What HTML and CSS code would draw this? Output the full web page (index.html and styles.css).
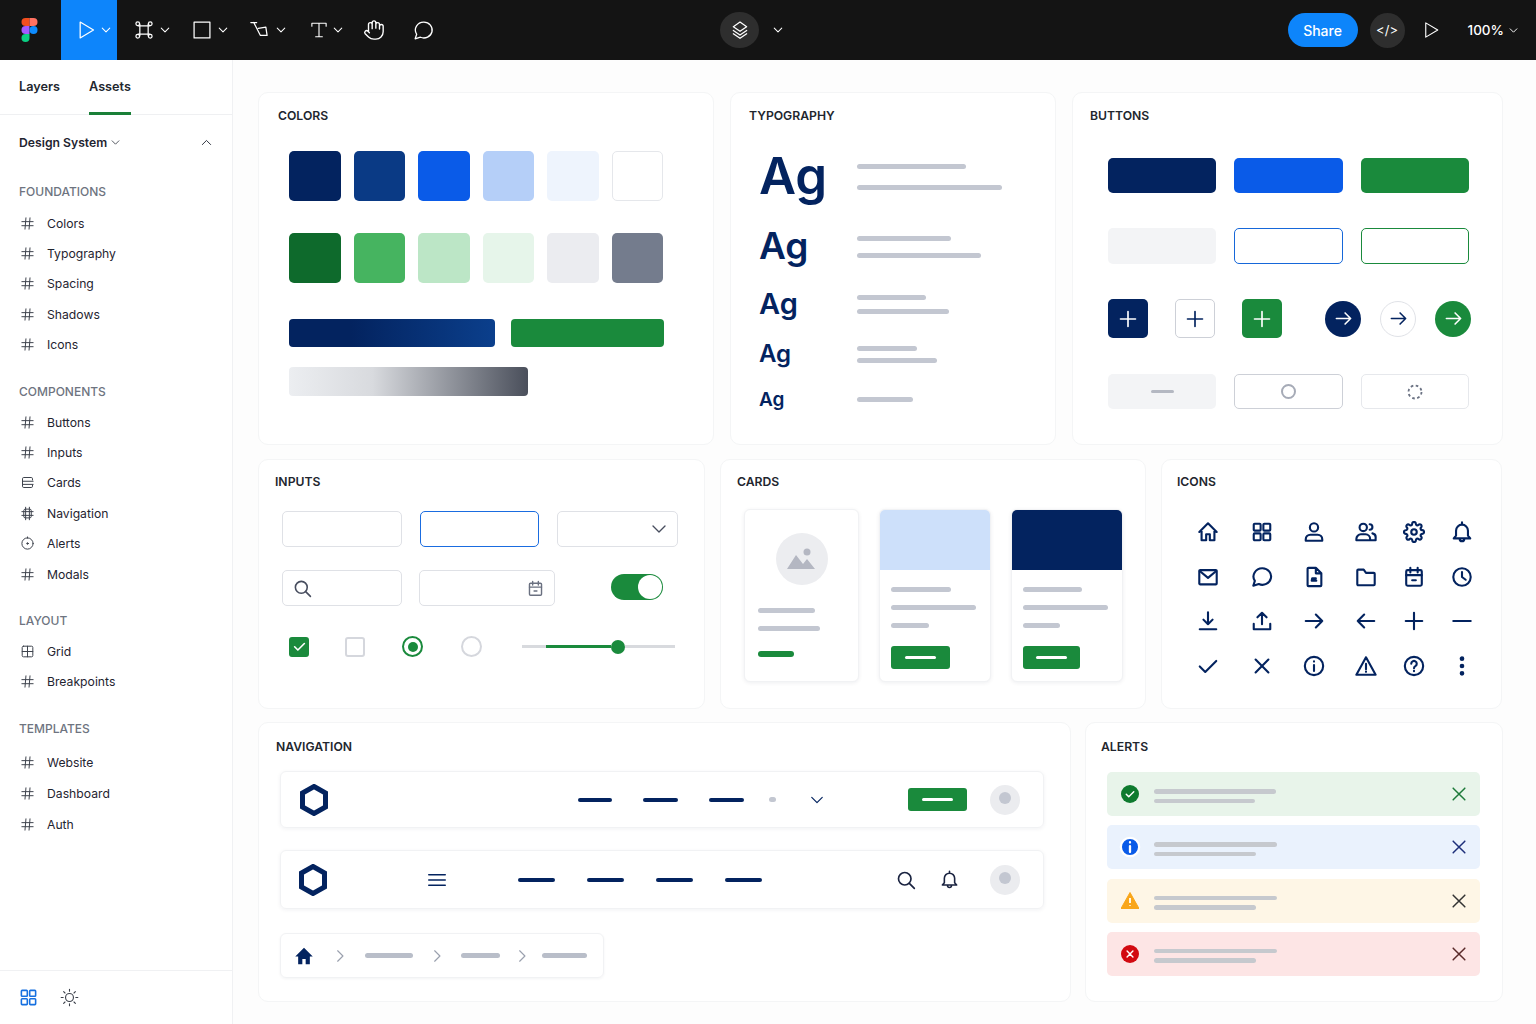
FILE: index.html
```html
<!DOCTYPE html>
<html lang="en">
<head>
    <meta charset="UTF-8">
    <meta name="viewport" content="width=device-width, initial-scale=1.0">
    <title>Design System</title>
    <link rel="stylesheet" href="styles.css">
</head>
<body>

    <svg class="sprite" xmlns="http://www.w3.org/2000/svg">
        <symbol id="i-play" viewBox="0 0 24 24"><path d="M5 2.500 21 12 5 21.500z"/></symbol>
        <symbol id="i-chev" viewBox="0 0 24 24"><path d="M3 7.500l9 9 9-9"/></symbol>
        <symbol id="i-frame" viewBox="0 0 24 24"><path d="M7 5v14M17 5v14M5 7h14M5 17h14"/><circle cx="4.500" cy="4.500" r="2.200"/><circle cx="19.500" cy="4.500" r="2.200"/><circle cx="4.500" cy="19.500" r="2.200"/><circle cx="19.500" cy="19.500" r="2.200"/></symbol>
        <symbol id="i-rect" viewBox="0 0 24 24"><rect x="2.500" y="2.500" width="19" height="19"/></symbol>
        <symbol id="i-pen" viewBox="0 0 24 24"><path d="M1 3h7M4.500 3l8 15.500h8M10 10l9-1.500 1.500 10"/></symbol>
        <symbol id="i-type" viewBox="0 0 24 24"><path d="M2.500 7V3h19v4M12 3v18M7.500 21h9"/></symbol>
        <symbol id="i-hand" viewBox="0 0 24 24"><path d="M18 11V6a2 2 0 0 0-4 0M14 10V4a2 2 0 0 0-4 0v2M10 10.500V6a2 2 0 0 0-4 0v8M18 8a2 2 0 1 1 4 0v6a8 8 0 0 1-8 8h-2c-2.800 0-4.500-.86-6-2.340l-3.600-3.600a2 2 0 0 1 2.830-2.820L7 15"/></symbol>
        <symbol id="i-comment" viewBox="0 0 24 24"><path d="M12.500 2.500a9.500 9 0 1 1-4 17.200L2.500 21.500l1.700-5.200A9.500 9 0 0 1 12.500 2.500z"/></symbol>
        <symbol id="i-layers" viewBox="0 0 24 24"><path d="M12 2.500 20 8l-8 5.500L4 8zM4 12.500l8 5.500 8-5.500M4 16.500l8 5.500 8-5.500"/></symbol>
        <symbol id="i-hash" viewBox="0 0 24 24"><path d="M3 9h18M3 15.500h18M9.500 3 8 21M16 3l-1.500 18"/></symbol>
        <symbol id="i-cards" viewBox="0 0 24 24"><path d="M20 8V6a2 2 0 0 0-2-2H6a2 2 0 0 0-2 2v12a2 2 0 0 0 2 2h12a2 2 0 0 0 2-2v-2M4 10h17M4 15h17"/></symbol>
        <symbol id="i-navframe" viewBox="0 0 24 24"><rect x="6" y="5" width="12" height="14" rx="2.500"/><path d="M9 2v20M15 2v20M3 9h18M3 15h18"/></symbol>
        <symbol id="i-target" viewBox="0 0 24 24"><circle cx="12" cy="12" r="9"/><path d="M12 1.500v2"/><circle cx="12" cy="12" r="1.200" class="solid"/></symbol>
        <symbol id="i-gridbox" viewBox="0 0 24 24"><rect x="3.500" y="3.500" width="17" height="17" rx="2"/><path d="M3.500 12h17M12 3.500v17"/></symbol>
        <symbol id="i-search" viewBox="0 0 24 24"><circle cx="10.500" cy="10.500" r="7.500"/><path d="M16 16l6 6"/></symbol>
        <symbol id="i-calendar" viewBox="0 0 24 24"><rect x="3.500" y="4.500" width="17" height="17" rx="1.500"/><path d="M3.500 10h17M8 2v5M16 2v5M10 15.500h4"/></symbol>
        <symbol id="i-home" viewBox="0 0 24 24"><path d="M2.500 12 12 2.500l9.500 9.500M5 9.500V21h5v-6.500h4V21h5V9.500"/></symbol>
        <symbol id="i-grid" viewBox="0 0 24 24"><rect x="3" y="3" width="7.500" height="7.500" rx="1"/><rect x="13.500" y="3" width="7.500" height="7.500" rx="1"/><rect x="3" y="13.500" width="7.500" height="7.500" rx="1"/><rect x="13.500" y="13.500" width="7.500" height="7.500" rx="1"/></symbol>
        <symbol id="i-user" viewBox="0 0 24 24"><circle cx="12" cy="7" r="4.500"/><path d="M3 21.500V20a5 5 0 0 1 5-5h8a5 5 0 0 1 5 5v1.500z"/></symbol>
        <symbol id="i-users" viewBox="0 0 24 24"><circle cx="9" cy="7" r="4"/><path d="M1.500 21v-1.500a5 5 0 0 1 5-5h5a5 5 0 0 1 5 5V21zM16 3.500a3 3 0 0 1 0 6M19 13.500a4.500 4.500 0 0 1 3.500 5V21h-6"/></symbol>
        <symbol id="i-gear" viewBox="0 0 24 24"><circle cx="12" cy="12" r="3"/><path d="M19.400 15a1.650 1.650 0 0 0 .33 1.820l.06.06a2 2 0 0 1 0 2.830 2 2 0 0 1-2.830 0l-.06-.06a1.650 1.650 0 0 0-1.820-.33 1.650 1.650 0 0 0-1 1.510V21a2 2 0 0 1-2 2 2 2 0 0 1-2-2v-.09A1.650 1.650 0 0 0 9 19.400a1.650 1.650 0 0 0-1.820.33l-.06.06a2 2 0 0 1-2.830 0 2 2 0 0 1 0-2.830l.06-.06a1.650 1.650 0 0 0 .33-1.820 1.650 1.650 0 0 0-1.510-1H3a2 2 0 0 1-2-2 2 2 0 0 1 2-2h.09A1.650 1.650 0 0 0 4.600 9a1.650 1.650 0 0 0-.33-1.820l-.06-.06a2 2 0 0 1 0-2.830 2 2 0 0 1 2.830 0l.06.06a1.650 1.650 0 0 0 1.820.33H9a1.650 1.650 0 0 0 1-1.510V3a2 2 0 0 1 2-2 2 2 0 0 1 2 2v.09a1.650 1.650 0 0 0 1 1.510 1.650 1.650 0 0 0 1.820-.33l.06-.06a2 2 0 0 1 2.830 0 2 2 0 0 1 0 2.830l-.06.06a1.650 1.650 0 0 0-.33 1.820V9a1.650 1.650 0 0 0 1.510 1H21a2 2 0 0 1 2 2 2 2 0 0 1-2 2h-.09a1.650 1.650 0 0 0-1.510 1z"/></symbol>
        <symbol id="i-bell" viewBox="0 0 24 24"><path d="M12 4a6.500 6.500 0 0 1 6.500 6.500V16l2.500 3H3l2.500-3v-5.500A6.500 6.500 0 0 1 12 4zM12 1.500V4M9.500 19.500a2.500 2.500 0 0 0 5 0"/></symbol>
        <symbol id="i-mail" viewBox="0 0 24 24"><rect x="2.500" y="4.500" width="19" height="15.500" rx="1"/><path d="M3 5.500l9 7.500 9-7.500"/></symbol>
        <symbol id="i-file" viewBox="0 0 24 24"><path d="M6 2h8l6 6v13a1 1 0 0 1-1 1H6a1 1 0 0 1-1-1V3a1 1 0 0 1 1-1zM14 2v6h6M9.500 16h5M9.500 16l.5-2.500h4"/></symbol>
        <symbol id="i-folder" viewBox="0 0 24 24"><path d="M2.500 5a1 1 0 0 1 1-1h6l2.500 3.500h8.500a1 1 0 0 1 1 1V20a1 1 0 0 1-1 1h-17a1 1 0 0 1-1-1z"/></symbol>
        <symbol id="i-clock" viewBox="0 0 24 24"><circle cx="12" cy="12" r="9.500"/><path d="M12 6.500V12l4 3"/></symbol>
        <symbol id="i-download" viewBox="0 0 24 24"><path d="M12 2.500v13M7 10.500l5 5 5-5M3 21h18"/></symbol>
        <symbol id="i-upload" viewBox="0 0 24 24"><path d="M12 15.500V3M7 8l5-5 5 5M3 15v6h18v-6"/></symbol>
        <symbol id="i-right" viewBox="0 0 24 24"><path d="M3 12h18M14 5l7 7-7 7"/></symbol>
        <symbol id="i-left" viewBox="0 0 24 24"><path d="M21 12H3M10 5l-7 7 7 7"/></symbol>
        <symbol id="i-plus" viewBox="0 0 24 24"><path d="M12 3v18M3 12h18"/></symbol>
        <symbol id="i-minus" viewBox="0 0 24 24"><path d="M2.500 12h19"/></symbol>
        <symbol id="i-check" viewBox="0 0 24 24"><path d="M3 12.500l6 6L21 6.500"/></symbol>
        <symbol id="i-x" viewBox="0 0 24 24"><path d="M5 5l14 14M19 5 5 19"/></symbol>
        <symbol id="i-info" viewBox="0 0 24 24"><circle cx="12" cy="12" r="10"/><path d="M12 11v6.500M12 6.800v.4"/></symbol>
        <symbol id="i-warn" viewBox="0 0 24 24"><path d="M12 2.500 1.500 21.500h21zM12 9.500v6M12 18v.4"/></symbol>
        <symbol id="i-help" viewBox="0 0 24 24"><circle cx="12" cy="12" r="10"/><path d="M9 9.500a3 3 0 1 1 4.500 2.600c-1 .6-1.500 1.200-1.500 2.400M12 17.300v.4"/></symbol>
        <symbol id="i-dots" viewBox="0 0 24 24"><circle cx="12" cy="4" r="1.400"/><circle cx="12" cy="12" r="1.400"/><circle cx="12" cy="20" r="1.400"/></symbol>
        <symbol id="i-sun" viewBox="0 0 24 24"><circle cx="12" cy="12" r="5"/><path d="M12 1.500v2.500M12 20v2.500M1.500 12H4M20 12h2.500M4.600 4.600l1.700 1.700M17.700 17.700l1.700 1.700M4.600 19.400l1.700-1.700M17.700 6.300l1.700-1.700"/></symbol>
        <symbol id="i-hex" viewBox="0 0 30 32"><path d="M15 2.500 26.500 9v14L15 29.500 3.500 23V9z"/></symbol>
        <symbol id="i-menu" viewBox="0 0 24 24"><path d="M1 5h22M1 12h22M1 19h22"/></symbol>
        <symbol id="i-crumb" viewBox="0 0 24 24"><path d="M8 3l9 9-9 9"/></symbol>
    </svg>

    <header class="topbar">
        <div class="logo">
            <svg viewBox="0 0 16 24" width="17" height="24">
                <path fill="#f24e1e" d="M8 0H4a4 4 0 0 0 0 8h4z"/>
                <path fill="#ff7262" d="M8 0h4a4 4 0 0 1 0 8H8z"/>
                <path fill="#a259ff" d="M8 8H4a4 4 0 0 0 0 8h4z"/>
                <circle fill="#0d8cff" cx="12" cy="12" r="4"/>
                <path fill="#0acf83" d="M4 16h4v4a4 4 0 1 1-4-4z"/>
            </svg>
        </div>
        <div class="move-tool">
            <svg class="icon tb-icon"><use href="#i-play"/></svg>
            <svg class="icon tb-chev"><use href="#i-chev"/></svg>
        </div>
        <div class="tools">
            <div class="tool"><svg class="icon tb-icon"><use href="#i-frame"/></svg><svg class="icon tb-chev"><use href="#i-chev"/></svg></div>
            <div class="tool"><svg class="icon tb-icon"><use href="#i-rect"/></svg><svg class="icon tb-chev"><use href="#i-chev"/></svg></div>
            <div class="tool"><svg class="icon tb-icon"><use href="#i-pen"/></svg><svg class="icon tb-chev"><use href="#i-chev"/></svg></div>
            <div class="tool tool-type"><svg class="icon tb-icon"><use href="#i-type"/></svg><svg class="icon tb-chev"><use href="#i-chev"/></svg></div>
            <div class="tool tool-hand"><svg class="icon tb-icon"><use href="#i-hand"/></svg></div>
            <div class="tool tool-comment"><svg class="icon tb-icon"><use href="#i-comment"/></svg></div>
        </div>
        <div class="center-tools">
            <div class="round-btn layers-btn"><svg class="icon"><use href="#i-layers"/></svg></div>
            <svg class="icon tb-chev"><use href="#i-chev"/></svg>
        </div>
        <div class="right-tools">
            <div class="share">Share</div>
            <div class="round-btn code-btn">&lt;/&gt;</div>
            <svg class="icon tb-play"><use href="#i-play"/></svg>
            <div class="zoom">100%<svg class="icon tb-chev"><use href="#i-chev"/></svg></div>
        </div>
    </header>

    <div class="app">
        <aside class="sidebar">
            <div class="tabs">
                <div class="tab">Layers</div>
                <div class="tab active">Assets</div>
            </div>
            <div class="lib-row">
                <span>Design System</span>
                <svg class="icon lib-chev"><use href="#i-chev"/></svg>
                <svg class="icon lib-up"><use href="#i-chev"/></svg>
            </div>
            <div class="nav-lists">
                <div class="group">
                    <div class="group-title">FOUNDATIONS</div>
                    <div class="item"><svg class="icon"><use href="#i-hash"/></svg>Colors</div>
                    <div class="item"><svg class="icon"><use href="#i-hash"/></svg>Typography</div>
                    <div class="item"><svg class="icon"><use href="#i-hash"/></svg>Spacing</div>
                    <div class="item"><svg class="icon"><use href="#i-hash"/></svg>Shadows</div>
                    <div class="item"><svg class="icon"><use href="#i-hash"/></svg>Icons</div>
                </div>
                <div class="group">
                    <div class="group-title">COMPONENTS</div>
                    <div class="item"><svg class="icon"><use href="#i-hash"/></svg>Buttons</div>
                    <div class="item"><svg class="icon"><use href="#i-hash"/></svg>Inputs</div>
                    <div class="item"><svg class="icon"><use href="#i-cards"/></svg>Cards</div>
                    <div class="item"><svg class="icon"><use href="#i-navframe"/></svg>Navigation</div>
                    <div class="item"><svg class="icon"><use href="#i-target"/></svg>Alerts</div>
                    <div class="item"><svg class="icon"><use href="#i-hash"/></svg>Modals</div>
                </div>
                <div class="group">
                    <div class="group-title">LAYOUT</div>
                    <div class="item"><svg class="icon"><use href="#i-gridbox"/></svg>Grid</div>
                    <div class="item"><svg class="icon"><use href="#i-hash"/></svg>Breakpoints</div>
                </div>
                <div class="group group-templates">
                    <div class="group-title">TEMPLATES</div>
                    <div class="item"><svg class="icon"><use href="#i-hash"/></svg>Website</div>
                    <div class="item"><svg class="icon"><use href="#i-hash"/></svg>Dashboard</div>
                    <div class="item"><svg class="icon"><use href="#i-hash"/></svg>Auth</div>
                </div>
            </div>
            <div class="side-footer">
                <svg class="icon foot-grid"><use href="#i-grid"/></svg>
                <svg class="icon foot-sun"><use href="#i-sun"/></svg>
            </div>
        </aside>

        <main class="canvas">
            <div class="row row-top">
                <section class="panel colors">
                    <h2 class="panel-title">COLORS</h2>
                    <div class="swatches">
                        <div class="swatch navy"></div>
                        <div class="swatch navy2"></div>
                        <div class="swatch blue"></div>
                        <div class="swatch sky"></div>
                        <div class="swatch ice"></div>
                        <div class="swatch white"></div>
                        <div class="swatch forest"></div>
                        <div class="swatch leaf"></div>
                        <div class="swatch mint"></div>
                        <div class="swatch pale"></div>
                        <div class="swatch mist"></div>
                        <div class="swatch slate"></div>
                    </div>
                    <div class="grad-row">
                        <div class="grad grad-navy"></div>
                        <div class="grad grad-green"></div>
                    </div>
                    <div class="grad grad-gray"></div>
                </section>

                <section class="panel typography">
                    <h2 class="panel-title">TYPOGRAPHY</h2>
                    <div class="type-rows">
                        <div class="type-row r1">
                            <div class="ag">Ag</div>
                            <div class="type-lines"><div class="line" style="width:109px"></div><div class="line" style="width:145px"></div></div>
                        </div>
                        <div class="type-row r2">
                            <div class="ag">Ag</div>
                            <div class="type-lines"><div class="line" style="width:94px"></div><div class="line" style="width:124px"></div></div>
                        </div>
                        <div class="type-row r3">
                            <div class="ag">Ag</div>
                            <div class="type-lines"><div class="line" style="width:69px"></div><div class="line" style="width:92px"></div></div>
                        </div>
                        <div class="type-row r4">
                            <div class="ag">Ag</div>
                            <div class="type-lines"><div class="line" style="width:60px"></div><div class="line" style="width:80px"></div></div>
                        </div>
                        <div class="type-row r5">
                            <div class="ag">Ag</div>
                            <div class="type-lines"><div class="line" style="width:56px"></div></div>
                        </div>
                    </div>
                </section>

                <section class="panel buttons">
                    <h2 class="panel-title">BUTTONS</h2>
                    <div class="btn-rows">
                        <div class="btn-row">
                            <div class="btn b-navy"></div>
                            <div class="btn b-blue"></div>
                            <div class="btn b-green"></div>
                        </div>
                        <div class="btn-row tall">
                            <div class="btn b-soft"></div>
                            <div class="btn b-outline-blue"></div>
                            <div class="btn b-outline-green"></div>
                        </div>
                        <div class="icon-btns">
                            <div class="sq b-navy"><svg class="icon"><use href="#i-plus"/></svg></div>
                            <div class="sq sq-plain"><svg class="icon"><use href="#i-plus"/></svg></div>
                            <div class="sq b-green"><svg class="icon"><use href="#i-plus"/></svg></div>
                            <div class="circ b-navy first"><svg class="icon"><use href="#i-right"/></svg></div>
                            <div class="circ circ-plain"><svg class="icon"><use href="#i-right"/></svg></div>
                            <div class="circ b-green"><svg class="icon"><use href="#i-right"/></svg></div>
                        </div>
                        <div class="btn-row">
                            <div class="btn b-soft state"><span class="dash"></span></div>
                            <div class="btn b-line state"><span class="ring"></span></div>
                            <div class="btn b-faint state">
                                <svg class="spinner" viewBox="0 0 16 16"><circle cx="8" cy="8" r="6.500" stroke-dasharray="2.600 2.500"/></svg>
                            </div>
                        </div>
                    </div>
                </section>
            </div>

            <div class="row row-mid">
                <section class="panel inputs">
                    <h2 class="panel-title">INPUTS</h2>
                    <div class="input-row first">
                        <div class="field w120"></div>
                        <div class="field w119 focus"></div>
                        <div class="field w121 end"><svg class="icon field-chev"><use href="#i-chev"/></svg></div>
                    </div>
                    <div class="input-row second">
                        <div class="field w120"><svg class="icon field-search"><use href="#i-search"/></svg></div>
                        <div class="field w136 end"><svg class="icon field-cal"><use href="#i-calendar"/></svg></div>
                        <div class="toggle"><span class="knob"></span></div>
                    </div>
                    <div class="controls">
                        <div class="check on"><svg class="icon"><use href="#i-check"/></svg></div>
                        <div class="check"></div>
                        <div class="radio on"><span></span></div>
                        <div class="radio"></div>
                        <div class="slider">
                            <span class="track s24"></span>
                            <span class="track fill"></span>
                            <span class="thumb"></span>
                            <span class="track s50"></span>
                        </div>
                    </div>
                </section>

                <section class="panel cards">
                    <h2 class="panel-title">CARDS</h2>
                    <div class="card-row">
                        <div class="card card-plain">
                            <div class="card-avatar">
                                <svg viewBox="0 0 30 24" width="30" height="24">
                                    <circle cx="20" cy="5" r="3.500" fill="#b4b7c2"/>
                                    <path fill="#b4b7c2" d="M0 22 9 8l7 9 4-5 8 10z"/>
                                </svg>
                            </div>
                            <div class="line cl" style="width:57px"></div>
                            <div class="line cl" style="width:62px"></div>
                            <div class="line card-green" style="width:36px"></div>
                        </div>
                        <div class="card">
                            <div class="card-img img-sky"></div>
                            <div class="card-body">
                                <div class="line cl" style="width:60px"></div>
                                <div class="line cl" style="width:85px"></div>
                                <div class="line cl" style="width:38px"></div>
                                <div class="card-btn"><span></span></div>
                            </div>
                        </div>
                        <div class="card">
                            <div class="card-img img-navy"></div>
                            <div class="card-body">
                                <div class="line cl" style="width:59px"></div>
                                <div class="line cl" style="width:85px"></div>
                                <div class="line cl" style="width:37px"></div>
                                <div class="card-btn narrow"><span></span></div>
                            </div>
                        </div>
                    </div>
                </section>

                <section class="panel icons-panel">
                    <h2 class="panel-title">ICONS</h2>
                    <div class="icon-grid">
                        <svg class="icon"><use href="#i-home"/></svg>
                        <svg class="icon"><use href="#i-grid"/></svg>
                        <svg class="icon"><use href="#i-user"/></svg>
                        <svg class="icon"><use href="#i-users"/></svg>
                        <svg class="icon"><use href="#i-gear"/></svg>
                        <svg class="icon"><use href="#i-bell"/></svg>
                        <svg class="icon"><use href="#i-mail"/></svg>
                        <svg class="icon"><use href="#i-comment"/></svg>
                        <svg class="icon"><use href="#i-file"/></svg>
                        <svg class="icon"><use href="#i-folder"/></svg>
                        <svg class="icon"><use href="#i-calendar"/></svg>
                        <svg class="icon"><use href="#i-clock"/></svg>
                        <svg class="icon"><use href="#i-download"/></svg>
                        <svg class="icon"><use href="#i-upload"/></svg>
                        <svg class="icon"><use href="#i-right"/></svg>
                        <svg class="icon"><use href="#i-left"/></svg>
                        <svg class="icon"><use href="#i-plus"/></svg>
                        <svg class="icon"><use href="#i-minus"/></svg>
                        <svg class="icon"><use href="#i-check"/></svg>
                        <svg class="icon"><use href="#i-x"/></svg>
                        <svg class="icon"><use href="#i-info"/></svg>
                        <svg class="icon"><use href="#i-warn"/></svg>
                        <svg class="icon"><use href="#i-help"/></svg>
                        <svg class="icon icon-solid"><use href="#i-dots"/></svg>
                    </div>
                </section>
            </div>

            <div class="row row-bottom">
                <section class="panel navigation">
                    <h2 class="panel-title">NAVIGATION</h2>
                    <div class="navbar nb1">
                        <svg class="icon hex"><use href="#i-hex"/></svg>
                        <div class="nav-dashes d1">
                            <span class="dash-navy w34"></span>
                            <span class="dash-navy w35"></span>
                            <span class="dash-navy w35"></span>
                        </div>
                        <span class="nav-dot"></span>
                        <svg class="icon nav-chev"><use href="#i-chev"/></svg>
                        <div class="nav-cta"><span></span></div>
                        <div class="avatar"><span></span></div>
                    </div>
                    <div class="navbar nb2">
                        <svg class="icon hex"><use href="#i-hex"/></svg>
                        <svg class="icon nav-menu"><use href="#i-menu"/></svg>
                        <div class="nav-dashes d2">
                            <span class="dash-navy w37"></span>
                            <span class="dash-navy w37"></span>
                            <span class="dash-navy w37"></span>
                            <span class="dash-navy w37"></span>
                        </div>
                        <svg class="icon nav-search"><use href="#i-search"/></svg>
                        <svg class="icon nav-bell"><use href="#i-bell"/></svg>
                        <div class="avatar"><span></span></div>
                    </div>
                    <div class="crumbs">
                        <svg class="crumb-home" viewBox="0 0 24 24"><path d="M12 2 1.500 12.500H5V22h5v-6.500h4V22h5v-9.500h3.500z"/></svg>
                        <svg class="icon crumb-sep s1"><use href="#i-crumb"/></svg>
                        <span class="line crumb-line" style="width:48px"></span>
                        <svg class="icon crumb-sep"><use href="#i-crumb"/></svg>
                        <span class="line crumb-line" style="width:39px"></span>
                        <svg class="icon crumb-sep s3"><use href="#i-crumb"/></svg>
                        <span class="line crumb-line" style="width:45px"></span>
                    </div>
                </section>

                <section class="panel alerts">
                    <h2 class="panel-title">ALERTS</h2>
                    <div class="alert-list">
                        <div class="alert a-success">
                            <div class="alert-icon"><svg class="icon"><use href="#i-check"/></svg></div>
                            <div class="alert-lines"><div class="line" style="width:122px"></div><div class="line" style="width:101px"></div></div>
                            <svg class="icon alert-x"><use href="#i-x"/></svg>
                        </div>
                        <div class="alert a-info">
                            <div class="alert-icon"><svg class="icon"><use href="#i-info"/></svg></div>
                            <div class="alert-lines"><div class="line" style="width:123px"></div><div class="line" style="width:102px"></div></div>
                            <svg class="icon alert-x"><use href="#i-x"/></svg>
                        </div>
                        <div class="alert a-warn">
                            <svg class="warn-tri" viewBox="0 0 18 17"><path d="M9 .5 18 16.500H0z" fill="#f9a61a" stroke="#f9a61a" stroke-linejoin="round"/><path d="M9 6v5M9 13v.8" stroke="#fff" stroke-width="1.800" fill="none"/></svg>
                            <div class="alert-lines"><div class="line" style="width:123px"></div><div class="line" style="width:102px"></div></div>
                            <svg class="icon alert-x"><use href="#i-x"/></svg>
                        </div>
                        <div class="alert a-error">
                            <div class="alert-icon"><svg class="icon"><use href="#i-x"/></svg></div>
                            <div class="alert-lines"><div class="line" style="width:123px"></div><div class="line" style="width:102px"></div></div>
                            <svg class="icon alert-x"><use href="#i-x"/></svg>
                        </div>
                    </div>
                </section>
            </div>
        </main>
    </div>

</body>
</html>
```

FILE: styles.css
```css
* {
    box-sizing: border-box;
}
html, body {
    margin: 0;
    height: 100%;
}
body {
    font-family: Inter, "Liberation Sans", sans-serif;
    background: #fdfdfd;
    color: #1f2430;
    overflow: hidden;
}
.sprite {
    display: none;
}
.icon {
    display: block;
    fill: none;
    stroke: currentColor;
    stroke-width: 2;
    stroke-linecap: round;
    stroke-linejoin: round;
    flex: none;
}
.solid {
    fill: currentColor;
}

/* top toolbar */
.topbar {
    height: 60px;
    background: #141414;
    color: #fff;
    display: flex;
    align-items: center;
}
.logo {
    width: 61px;
    padding-left: 21px;
    display: flex;
}
.move-tool {
    width: 56px;
    height: 60px;
    background: #0d85fb;
    display: flex;
    align-items: center;
    padding-left: 15px;
    gap: 5px;
}
.tb-icon {
    width: 20px;
    height: 20px;
    stroke-width: 1.500;
}
.tb-chev {
    width: 10px;
    height: 10px;
    stroke-width: 2.500;
}
.tools {
    display: flex;
    align-items: center;
    gap: 22px;
    padding-left: 17px;
}
.tool {
    display: flex;
    align-items: center;
    gap: 6px;
}
.tool-type {
    margin-left: 2px;
    gap: 5px;
}
.tool-type .tb-icon {
    width: 18px;
    height: 20px;
}
.tool-hand {
    margin-left: -2px;
}
.tool-hand .tb-icon {
    width: 22px;
    height: 22px;
}
.tool-comment {
    margin-left: 6px;
}
.tool-comment .tb-icon {
    width: 21px;
    height: 21px;
}
.center-tools {
    display: flex;
    align-items: center;
    gap: 14px;
    margin-left: 286px;
}
.round-btn {
    border-radius: 50%;
    background: #2e2e2e;
    display: flex;
    align-items: center;
    justify-content: center;
}
.layers-btn {
    width: 39px;
    height: 36px;
}
.layers-btn .icon {
    width: 20px;
    height: 20px;
    stroke-width: 1.500;
}
.right-tools {
    margin-left: auto;
    display: flex;
    align-items: center;
    padding-right: 18px;
}
.share {
    width: 70px;
    height: 34px;
    border-radius: 17px;
    background: #0d85fb;
    font-size: 14px;
    font-weight: 500;
    display: flex;
    align-items: center;
    justify-content: center;
}
.code-btn {
    width: 35px;
    height: 35px;
    margin-left: 12px;
    font-size: 13px;
    font-weight: 400;
}
.tb-play {
    width: 18px;
    height: 18px;
    stroke-width: 1.500;
    margin-left: 17px;
}
.zoom {
    margin-left: 28px;
    font-size: 13.500px;
    font-weight: 500;
    display: flex;
    align-items: center;
    gap: 5px;
}
.zoom .tb-chev {
    width: 9px;
    height: 9px;
}

/* left sidebar */
.app {
    display: flex;
    height: 964px;
}
.sidebar {
    width: 233px;
    flex: none;
    background: #fff;
    border-right: 1px solid #f0f1f3;
    display: flex;
    flex-direction: column;
}
.tabs {
    height: 55px;
    display: flex;
    gap: 29px;
    padding: 0 19px;
    border-bottom: 1px solid #eff0f2;
}
.tab {
    height: 55px;
    padding-top: 19px;
    font-size: 12.700px;
    line-height: 16px;
    font-weight: 600;
    color: #23272f;
}
.tab.active {
    border-bottom: 3px solid #1a8038;
}
.lib-row {
    display: flex;
    align-items: center;
    height: 16px;
    margin-top: 19px;
    padding: 0 19px;
    font-size: 12.200px;
    font-weight: 600;
}
.lib-chev {
    width: 9px;
    height: 9px;
    margin-left: 4px;
}
.lib-up {
    width: 11px;
    height: 11px;
    margin-left: auto;
    margin-right: 1px;
    transform: rotate(180deg);
}
.nav-lists {
    flex: 1;
    padding: 34px 0 0 19px;
}
.group {
    margin-bottom: 24px;
}
.group-title {
    font-size: 12px;
    line-height: 16px;
    font-weight: 500;
    color: #6e7480;
    margin-bottom: 7px;
}
.group:first-child .group-title {
    margin-bottom: 8px;
}
.group-templates .group-title {
    margin-bottom: 10px;
}
.item {
    height: 30.400px;
    display: flex;
    align-items: center;
    gap: 12px;
    font-size: 12.200px;
    color: #1f2430;
}
.item .icon {
    width: 15px;
    height: 15px;
    margin-left: 1px;
    stroke-width: 1.600;
    color: #3f444e;
}
.group-templates .item {
    height: 31px;
}
.side-footer {
    height: 54px;
    border-top: 1px solid #f0f1f3;
    display: flex;
    align-items: center;
    padding-left: 19px;
    gap: 22px;
}
.foot-grid {
    width: 19px;
    height: 19px;
    color: #1670e0;
}
.foot-sun {
    width: 19px;
    height: 19px;
    stroke-width: 1.400;
    color: #3c414b;
}

/* canvas */
.canvas {
    flex: 1;
    padding: 32px 33px 0 25px;
    background: #fdfdfd;
}
.row {
    display: grid;
}
.row-top {
    grid-template-columns: 456px 326px 431px;
    column-gap: 16px;
    height: 353px;
    margin-bottom: 14px;
}
.row-mid {
    grid-template-columns: 447px 426px 341px;
    column-gap: 15px;
    height: 250px;
    margin-bottom: 13px;
}
.row-bottom {
    grid-template-columns: 813px 418px;
    column-gap: 14px;
    height: 280px;
}
.panel {
    background: #fff;
    border: 1px solid #f4f5f6;
    border-radius: 10px;
}
.panel-title {
    margin: 0;
    font-size: 12.200px;
    line-height: 16px;
    font-weight: 600;
    color: #22262e;
}
.line {
    display: block;
    height: 5px;
    border-radius: 3px;
    background: #c3c7d1;
}

/* colors */
.colors {
    padding: 15px 19px;
}
.swatches {
    margin: 27px 0 0 11px;
    display: grid;
    grid-template-columns: repeat(6, 51.500px);
    column-gap: 13px;
    row-gap: 32px;
}
.swatch {
    height: 50px;
    border-radius: 5px;
}
.navy { background: #03235f; }
.navy2 { background: #0a3a85; }
.blue { background: #0a5be8; }
.sky { background: #b5cff8; }
.ice { background: #eef4fd; }
.white { background: #fff; border: 1px solid #e5e7eb; }
.forest { background: #0e6a2c; }
.leaf { background: #46b460; }
.mint { background: #bce6c6; }
.pale { background: #e6f5ea; }
.mist { background: #ebecf0; }
.slate { background: #747c8d; }
.grad-row {
    display: flex;
    gap: 16px;
    margin: 36px 0 0 11px;
}
.grad {
    height: 28px;
    border-radius: 4px;
}
.grad-navy {
    width: 206px;
    background: linear-gradient(90deg, #03235f, #03235f 30%, #0b3f8c);
}
.grad-green {
    width: 153px;
    background: #1a8a3c;
}
.grad-gray {
    width: 239px;
    height: 29px;
    margin: 20px 0 0 11px;
    background: linear-gradient(90deg, #eceef1, #d8dade 35%, #4a4f5b);
}

/* typography */
.typography {
    padding: 15px 18px;
}
.type-rows {
    margin-top: 18px;
}
.type-row {
    display: flex;
    align-items: center;
    padding-left: 10px;
}
.ag {
    width: 98px;
    flex: none;
    font-weight: 600;
    color: #03235f;
    line-height: 1;
}
.type-lines {
    display: flex;
    flex-direction: column;
}
.r1 { height: 70px; }
.r1 .ag { font-size: 51px; margin-top: -3px; }
.r1 .type-lines { gap: 16px; }
.r2 { height: 70px; }
.r2 .ag { font-size: 37px; margin-top: -3px; }
.r2 .type-lines { gap: 12px; }
.r3 { height: 44px; }
.r3 .ag { font-size: 29px; margin-top: -2px; }
.r3 .type-lines { gap: 9px; }
.r4 { height: 56px; }
.r4 .ag { font-size: 24px; }
.r4 .type-lines { gap: 7px; }
.r5 { height: 34px; }
.r5 .ag { font-size: 19px; }

/* buttons */
.buttons {
    padding: 15px 17px;
}
.btn-rows {
    margin: 34px 0 0 18px;
    display: flex;
    flex-direction: column;
    gap: 35px;
}
.btn-row {
    display: grid;
    grid-template-columns: 108px 109px 108px;
    column-gap: 18px;
    height: 35px;
}
.btn-row.tall {
    height: 36px;
}
.btn {
    border-radius: 5px;
}
.b-navy { background: #03235f; color: #fff; }
.b-blue { background: #0a5be8; }
.b-green { background: #1a8a3c; color: #fff; }
.b-soft { background: #f3f4f6; }
.b-outline-blue { border: 1.500px solid #1667d9; }
.b-outline-green { border: 1.500px solid #1a8a3c; }
.b-line { border: 1.500px solid #cdd0d7; }
.b-faint { border: 1.500px solid #e6e8ec; }
.state {
    display: flex;
    align-items: center;
    justify-content: center;
}
.dash {
    width: 23px;
    height: 3px;
    border-radius: 2px;
    background: #b4b8c2;
}
.ring {
    width: 15px;
    height: 15px;
    border-radius: 50%;
    border: 2px solid #a6abb7;
}
.spinner {
    width: 16px;
    height: 16px;
    fill: none;
    stroke: #6b7283;
    stroke-width: 1.800;
}
.icon-btns {
    display: flex;
    align-items: center;
    height: 39px;
    margin-bottom: 1px;
}
.sq {
    width: 40px;
    height: 39px;
    flex: none;
    margin-right: 27px;
    border-radius: 5px;
    display: flex;
    align-items: center;
    justify-content: center;
}
.sq .icon {
    width: 20px;
    height: 20px;
}
.sq-plain {
    border: 1.500px solid #cdd0d7;
    color: #03235f;
}
.circ {
    width: 36px;
    height: 36px;
    flex: none;
    margin-right: 19px;
    border-radius: 50%;
    display: flex;
    align-items: center;
    justify-content: center;
}
.circ .icon {
    width: 19px;
    height: 19px;
}
.circ.first {
    margin-left: 16px;
}
.circ-plain {
    border: 1.500px solid #e0e2e7;
    color: #03235f;
}

/* inputs */
.inputs {
    padding: 14px 16px;
}
.input-row {
    display: flex;
    margin-left: 7px;
    align-items: center;
    height: 36px;
}
.input-row.first {
    margin-top: 21px;
    gap: 18px;
}
.input-row.second {
    margin-top: 23px;
    gap: 17px;
}
.field {
    height: 36px;
    background: #fff;
    border: 1.750px solid #dfe1e6;
    border-radius: 5px;
    display: flex;
    align-items: center;
}
.field.end {
    justify-content: flex-end;
}
.w119 { width: 119px; }
.w121 { width: 121px; }
.w120 { width: 120px; }
.w136 { width: 136px; }
.focus {
    border-color: #1a6ce0;
}
.field-chev {
    width: 16px;
    height: 16px;
    margin-right: 10px;
    color: #474d5e;
}
.field-search {
    width: 19px;
    height: 19px;
    margin-left: 10px;
    color: #474d5e;
}
.field-cal {
    width: 17px;
    height: 17px;
    margin-right: 10px;
    color: #6a7080;
}
.toggle {
    width: 52px;
    height: 26px;
    margin-left: 39px;
    margin-top: -2px;
    border-radius: 13px;
    background: #1a8a3c;
    display: flex;
    justify-content: flex-end;
    padding: 1px;
}
.knob {
    width: 24px;
    height: 24px;
    border-radius: 50%;
    background: #fff;
}
.controls {
    display: flex;
    align-items: center;
    margin: 30px 0 0 14px;
}
.check {
    width: 20px;
    height: 20px;
    margin-right: 36px;
    border: 2px solid #d5d7dd;
    border-radius: 3px;
    display: flex;
    align-items: center;
    justify-content: center;
}
.check + .check {
    margin-right: 37px;
}
.check.on {
    background: #1a8a3c;
    border-color: #1a8a3c;
    color: #fff;
}
.check .icon {
    width: 13px;
    height: 13px;
    stroke-width: 3;
}
.radio {
    width: 21px;
    height: 21px;
    margin-right: 38px;
    border: 2px solid #d5d7dd;
    border-radius: 50%;
    display: flex;
    align-items: center;
    justify-content: center;
}
.radio.on {
    border-color: #1a8a3c;
}
.radio span {
    width: 10px;
    height: 10px;
    border-radius: 50%;
    background: #1a8a3c;
}
.slider {
    display: flex;
    align-items: center;
    margin-left: 2px;
}
.track {
    height: 2.500px;
    background: #d8dade;
}
.s24 { width: 24px; }
.s50 { width: 50px; }
.track.fill {
    width: 65px;
    background: #1a8a3c;
}
.thumb {
    width: 14px;
    height: 14px;
    border-radius: 50%;
    background: #1a8a3c;
}

/* cards */
.cards {
    padding: 14px 16px;
}
.card-row {
    display: flex;
    gap: 20px;
    margin: 19px 0 0 7px;
}
.card {
    width: 112px;
    height: 173px;
    border: 1px solid #f1f2f4;
    border-radius: 6px;
    box-shadow: 0 1px 4px rgba(20, 30, 60, 0.07);
    background: #fff;
    overflow: hidden;
}
.card-plain {
    width: 115px;
    padding: 23px 13px;
    display: flex;
    flex-direction: column;
    gap: 13px;
}
.card-avatar {
    width: 52px;
    height: 52px;
    margin: 0 auto 10px;
    border-radius: 50%;
    background: #ecedf0;
    display: flex;
    align-items: center;
    justify-content: center;
}
.card-green {
    height: 6px;
    margin-top: 7px;
    background: #1a8a3c;
}
.card-img {
    height: 60px;
}
.img-sky { background: #cde0fa; }
.img-navy { background: #03235f; }
.card-body {
    padding: 17px 11px;
    display: flex;
    flex-direction: column;
    gap: 13px;
}
.card-btn {
    width: 59px;
    height: 23px;
    margin-top: 5px;
    border-radius: 3px;
    background: #1a8a3c;
    display: flex;
    align-items: center;
    justify-content: center;
}
.card-btn.narrow {
    width: 57px;
}
.card-btn span, .nav-cta span {
    width: 31px;
    height: 3px;
    background: #fff;
    border-radius: 2px;
}

/* icons */
.icons-panel {
    padding: 14px 15px;
}
.icon-grid {
    margin: 31px 0 0 20px;
    display: grid;
    grid-template-columns: 54px 52px 52px 48px 48px 22px;
    row-gap: 22.600px;
    color: #03235f;
}
.icon-grid .icon {
    width: 22px;
    height: 22px;
    stroke-width: 2.300;
}
.icon-solid {
    fill: currentColor;
}

/* navigation */
.navigation {
    padding: 16px 17px;
}
.navbar {
    width: 764px;
    margin-left: 4px;
    border: 1px solid #f1f2f4;
    border-radius: 6px;
    box-shadow: 0 1px 4px rgba(20, 30, 60, 0.06);
    display: flex;
    align-items: center;
}
.nb1 {
    height: 57px;
    margin-top: 16px;
    padding-left: 18px;
}
.nb2 {
    height: 59px;
    margin-top: 22px;
    padding-left: 17px;
}
.hex {
    width: 30px;
    height: 32px;
    stroke: #03235f;
    stroke-width: 5;
    stroke-linejoin: miter;
}
.nav-dashes {
    display: flex;
}
.d1 {
    margin-left: 249px;
    gap: 31px;
}
.d2 {
    margin-left: 72px;
    gap: 32px;
}
.dash-navy {
    height: 4px;
    border-radius: 2px;
    background: #03235f;
}
.w34 { width: 34px; }
.w35 { width: 35px; }
.w37 { width: 37px; }
.nav-dot {
    width: 7px;
    height: 5px;
    margin-left: 25px;
    border-radius: 3px;
    background: #c3c7d1;
}
.nav-chev {
    width: 14px;
    height: 14px;
    margin-left: 34px;
    color: #03235f;
}
.nav-cta {
    width: 59px;
    height: 23px;
    margin-left: 84px;
    border-radius: 3px;
    background: #1a8a3c;
    display: flex;
    align-items: center;
    justify-content: center;
}
.avatar {
    width: 30px;
    height: 30px;
    border-radius: 50%;
    background: #ebecef;
    margin-left: 23px;
    display: flex;
    align-items: center;
    justify-content: center;
}
.avatar span {
    width: 12px;
    height: 12px;
    border-radius: 50%;
    background: #c3c7d1;
    margin-bottom: 3px;
}
.nav-menu {
    width: 18px;
    height: 18px;
    margin-left: 100px;
    color: #03235f;
    stroke-width: 2;
}
.nav-search {
    width: 20px;
    height: 20px;
    margin-left: 134px;
    color: #1a2340;
}
.nav-bell {
    width: 19px;
    height: 19px;
    margin-left: 24px;
    color: #1a2340;
}
.nb2 .avatar {
    margin-left: 31px;
}
.crumbs {
    width: 324px;
    height: 45px;
    margin: 24px 0 0 4px;
    border: 1px solid #f1f2f4;
    border-radius: 6px;
    box-shadow: 0 1px 3px rgba(20, 30, 60, 0.05);
    display: flex;
    align-items: center;
    padding-left: 13px;
}
.crumb-home {
    width: 20px;
    height: 20px;
    fill: #03235f;
    flex: none;
}
.crumb-sep {
    width: 14px;
    height: 14px;
    margin: 0 17px;
    color: #9aa0ae;
    stroke-width: 2;
}
.crumb-sep.s1 {
    margin: 0 18px 0 19px;
}
.crumb-sep.s3 {
    margin: 0 13px 0 15px;
}
.crumb-line {
    background: #b9bec9;
}

/* alerts */
.alerts {
    padding: 16px 15px;
}
.alert-list {
    margin: 17px 0 0 6px;
    display: flex;
    flex-direction: column;
    gap: 9.300px;
}
.alert {
    width: 373px;
    height: 44px;
    border-radius: 5px;
    display: flex;
    align-items: center;
    padding-left: 14px;
}
.a-success { background: #e8f4ea; color: #1e7a3a; }
.a-info { background: #eaf2fd; color: #1e2f7a; }
.a-warn { background: #fef6e6; color: #333; }
.a-error { background: #fde5e5; color: #5a2a2a; }
.alert-icon {
    width: 18px;
    height: 18px;
    border-radius: 50%;
    color: #fff;
    display: flex;
    align-items: center;
    justify-content: center;
}
.alert-icon .icon {
    width: 10px;
    height: 10px;
    stroke-width: 3.500;
}
.a-success .alert-icon { background: #0e7a2e; }
.a-info .alert-icon { background: #0a5be8; }
.a-error .alert-icon { background: #d20a11; }
.a-info .alert-icon .icon {
    width: 22px;
    height: 22px;
    stroke-width: 2.500;
}
.warn-tri {
    width: 18px;
    height: 17px;
    flex: none;
}
.alert-lines {
    margin-left: 15px;
    display: flex;
    flex-direction: column;
    gap: 5px;
    margin-top: 4px;
}
.alert-lines .line {
    height: 4.500px;
    background: #c6c9ce;
}
.alert-x {
    width: 20px;
    height: 20px;
    margin-left: auto;
    margin-right: 11px;
    stroke-width: 1.800;
}
```
